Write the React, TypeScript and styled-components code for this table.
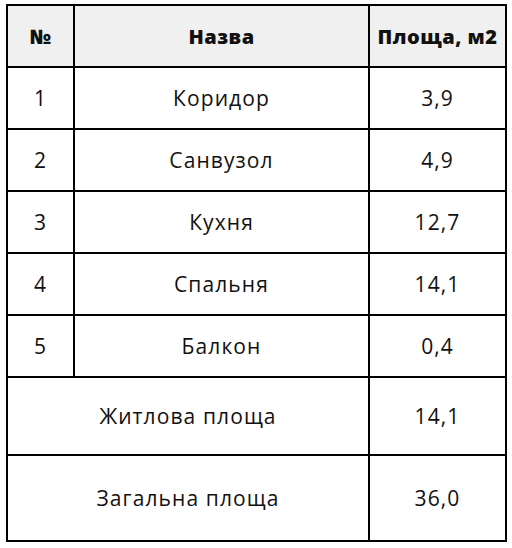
import styled, { createGlobalStyle } from 'styled-components';

type Row = {
  num?: number;
  name: string;
  area: string;
  height: number;
};

const rows: Row[] = [
  { num: 1, name: 'Коридор', area: '3,9', height: 60 },
  { num: 2, name: 'Санвузол', area: '4,9', height: 60 },
  { num: 3, name: 'Кухня', area: '12,7', height: 60 },
  { num: 4, name: 'Спальня', area: '14,1', height: 60 },
  { num: 5, name: 'Балкон', area: '0,4', height: 60 },
  { name: 'Житлова площа', area: '14,1', height: 76 },
  { name: 'Загальна площа', area: '36,0', height: 84 },
];

const GlobalStyle = createGlobalStyle`
  body {
    margin: 0;
    background: #ffffff;
    font-family: 'Open Sans', 'Liberation Sans', sans-serif;
    color: #111111;
  }
`;

const Page = styled.div`
  padding: 4px 0 0 6px;
`;

const Table = styled.div`
  display: grid;
  grid-template-columns: 65px 293px 135px;
  gap: 2px;
  padding: 2px;
  width: max-content;
  background: #000000;
`;

const Cell = styled.div<{ $head?: boolean; $span?: number; $h: number }>`
  display: flex;
  align-items: center;
  justify-content: center;
  height: ${(p) => p.$h}px;
  grid-column: span ${(p) => p.$span ?? 1};
  background: ${(p) => (p.$head ? '#f0f0f0' : '#ffffff')};
  font-size: ${(p) => (p.$head ? 20 : 21)}px;
  font-weight: ${(p) => (p.$head ? 800 : 400)};
  letter-spacing: ${(p) => (p.$head ? '0.5px' : '1.1px')};
`;

const App = (): React.ReactElement => (
  <Page>
    <GlobalStyle />
    <Table>
      <Cell $head $h={60}>№</Cell>
      <Cell $head $h={60}>Назва</Cell>
      <Cell $head $h={60}>Площа, м2</Cell>
      {rows.map((r) =>
        r.num ? (
          [
            <Cell key={`n${r.num}`} $h={r.height}>{r.num}</Cell>,
            <Cell key={`t${r.num}`} $h={r.height}>{r.name}</Cell>,
            <Cell key={`a${r.num}`} $h={r.height}>{r.area}</Cell>,
          ]
        ) : (
          [
            <Cell key={`t${r.name}`} $span={2} $h={r.height}>{r.name}</Cell>,
            <Cell key={`a${r.name}`} $h={r.height}>{r.area}</Cell>,
          ]
        )
      )}
    </Table>
  </Page>
);

export default App;
